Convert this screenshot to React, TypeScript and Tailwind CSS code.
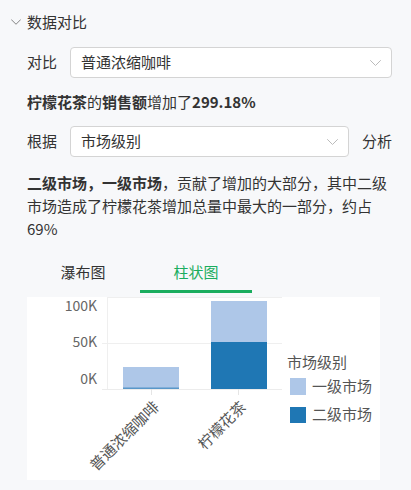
import React from "react";

const Chevron = ({ color = "#bbb", w = 11, h = 6 }: { color?: string; w?: number; h?: number }) => (
  <svg width={w} height={h} viewBox="0 0 11 6" fill="none">
    <path d="M0.5 0.5 L5.5 5.5 L10.5 0.5" stroke={color} strokeWidth="1" strokeLinecap="round" strokeLinejoin="round" />
  </svg>
);

function Chart() {
  const ff = "'Noto Sans CJK SC','Noto Sans',sans-serif";
  return (
    <svg width="353" height="183" viewBox="0 0 353 183" style={{ fontFamily: ff }}>
      {/* grid */}
      <line x1="80" y1="0.5" x2="255" y2="0.5" stroke="#efefef" />
      <line x1="75" y1="46.5" x2="255" y2="46.5" stroke="#efefef" />
      <line x1="80.5" y1="0" x2="80.5" y2="92" stroke="#efefef" />
      {/* y labels */}
      <text x="70" y="14" textAnchor="end" fontSize="14" fill="#666">100K</text>
      <text x="70" y="50" textAnchor="end" fontSize="14" fill="#666">50K</text>
      <text x="70" y="87" textAnchor="end" fontSize="14" fill="#666">0K</text>
      {/* bars */}
      <rect x="96" y="70" width="56" height="22" fill="#aec7e8" />
      <rect x="96" y="90.5" width="56" height="1.5" fill="#1f77b4" opacity="0.6" />
      <rect x="184" y="4" width="56" height="41" fill="#aec7e8" />
      <rect x="184" y="45" width="56" height="47" fill="#1f77b4" />
      {/* axis */}
      <line x1="75" y1="92.5" x2="255" y2="92.5" stroke="#ececec" />
      <line x1="124.5" y1="92" x2="124.5" y2="98" stroke="#e5e5e5" />
      <line x1="211.5" y1="92" x2="211.5" y2="98" stroke="#e5e5e5" />
      {/* x labels */}
      <text x="133" y="111" textAnchor="end" fontSize="15" fill="#555" transform="rotate(-45 133 111)">普通浓缩咖啡</text>
      <text x="220" y="111" textAnchor="end" fontSize="15" fill="#555" transform="rotate(-45 220 111)">柠檬花茶</text>
      {/* legend */}
      <text x="260" y="71" fontSize="15" fill="#555">市场级别</text>
      <rect x="263" y="81" width="16" height="17" fill="#aec7e8" />
      <text x="285" y="95" fontSize="15" fill="#555">一级市场</text>
      <rect x="263" y="110" width="16" height="16" fill="#1f77b4" />
      <text x="285" y="123" fontSize="15" fill="#555">二级市场</text>
    </svg>
  );
}

export default function App() {
  return (
    <div className="w-[411px] h-[490px] bg-[#f7f8fa] text-[#333] pl-[11px] pr-[19px] pt-[11px] text-[15px] font-['Noto_Sans_CJK_SC','Noto_Sans',sans-serif] overflow-hidden">
      <div className="flex items-center h-[22px] leading-[22px]">
        <div className="w-[10px] mr-[6px] flex items-center">
          <Chevron color="#777" w={10} h={6} />
        </div>
        <span>数据对比</span>
      </div>
      <div className="pl-[16px]">
        <div className="mt-[14px] flex items-center h-[31px]">
          <span className="w-[30px] mr-[13px] shrink-0">对比</span>
          <div className="flex-1 h-full bg-white border border-[#d4d4d4] rounded-[4px] pl-[10px] pr-[10px] flex items-center justify-between">
            <span>普通浓缩咖啡</span>
            <Chevron />
          </div>
        </div>
        <div className="mt-[13px] leading-[22px]">
          <span className="font-bold">柠檬花茶</span>
          <span>的</span>
          <span className="font-bold">销售额</span>
          <span>增加了</span>
          <span className="font-bold">299.18%</span>
        </div>
        <div className="mt-[13px] flex items-center h-[31px]">
          <span className="w-[30px] mr-[13px] shrink-0">根据</span>
          <div className="flex-1 h-full bg-white border border-[#d4d4d4] rounded-[4px] pl-[10px] pr-[10px] flex items-center justify-between">
            <span>市场级别</span>
            <Chevron />
          </div>
          <span className="ml-[13px] shrink-0">分析</span>
        </div>
        <p className="mt-[14px] leading-[23px]">
          <span className="font-bold">二级市场，一级市场</span>，贡献了增加的大部分，其中二级市场造成了柠檬花茶增加总量中最大的一部分，约占69%
        </p>
        <div className="mt-[21px] flex">
          <div className="w-[112px] text-center leading-[22px] pb-[7px] border-b-[3px] border-transparent">瀑布图</div>
          <div className="w-[112px] ml-[1px] text-center leading-[22px] pb-[7px] border-b-[3px] border-[#1aad5e] text-[#1aad5e]">柱状图</div>
        </div>
        <div className="mt-[4px] w-[353px] h-[183px] bg-white">
          <Chart />
        </div>
      </div>
    </div>
  );
}
